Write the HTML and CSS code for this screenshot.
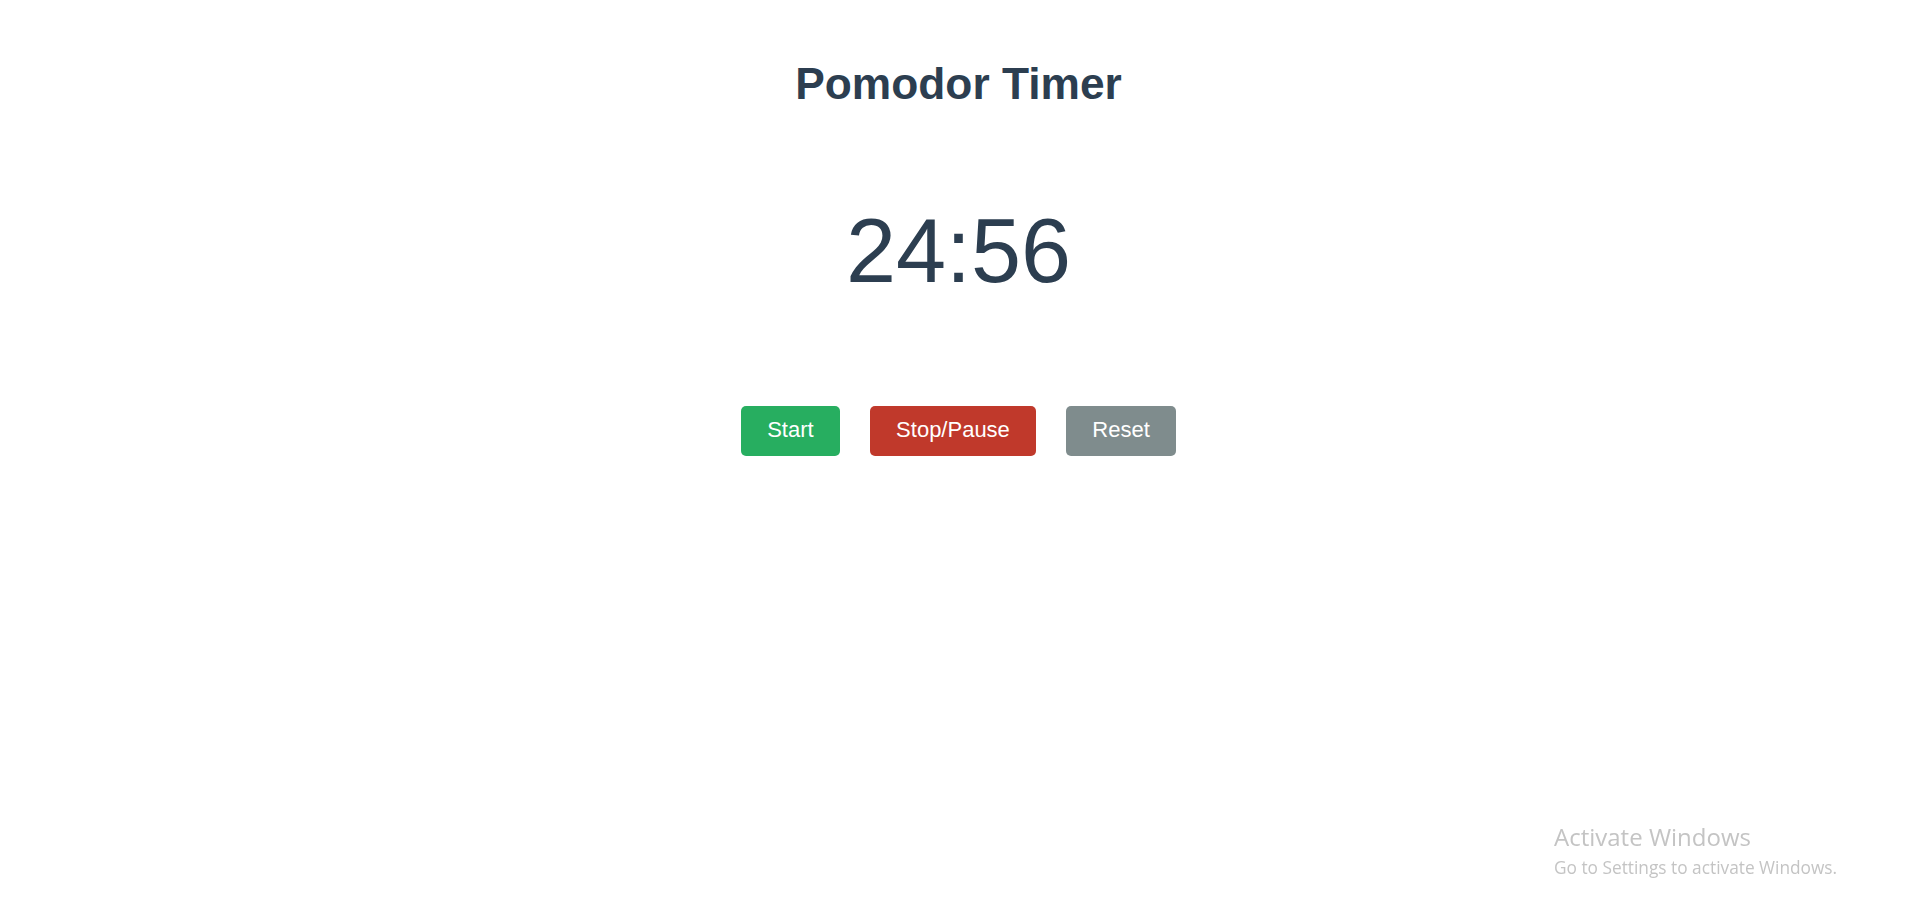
FILE: index.html
```html
<!DOCTYPE html>
<html lang="en">
<head>
<meta charset="utf-8">
<title>Pomodor Timer</title>
<link rel="stylesheet" href="styles.css">
</head>
<body>
<main class="app">
  <h1 class="title">Pomodor Timer</h1>
  <div class="timer">24:56</div>
  <div class="controls">
    <button class="btn btn-start">Start</button>
    <button class="btn btn-stop">Stop/Pause</button>
    <button class="btn btn-reset">Reset</button>
  </div>
</main>
<div class="watermark">
  <div class="wm-title">Activate Windows</div>
  <div class="wm-sub">Go to Settings to activate Windows.</div>
</div>
</body>
</html>
```
FILE: styles.css
```css
html, body {
  margin: 0;
  padding: 0;
  background: #ffffff;
}
body {
  font-family: "Liberation Sans", Arial, sans-serif;
  color: #2c3e50;
  height: 920px;
  overflow: hidden;
}
.app {
  display: flex;
  flex-direction: column;
  align-items: center;
}
.title {
  margin: 59px 0 0;
  font-size: 44.3px;
  font-weight: bold;
  line-height: 49px;
  color: #2c3e50;
}
.timer {
  margin-top: 93px;
  font-size: 90px;
  line-height: 100px;
  color: #2c3e50;
}
.controls {
  margin-top: 105px;
  display: flex;
  gap: 30.5px;
}
.btn {
  font-family: "Liberation Sans", Arial, sans-serif;
  font-size: 22px;
  line-height: 25px;
  padding: 11px 26px 14px;
  border: none;
  border-radius: 5px;
  color: #ffffff;
  cursor: pointer;
}
.btn-start { background: #27ae60; }
.btn-stop { background: #c0392b; }
.btn-reset { background: #7f8c8d; }
.watermark {
  position: fixed;
  left: 1554px;
  top: 823px;
  font-family: "Open Sans", "Noto Sans", sans-serif;
  color: #c4c4c4;
}
.wm-title {
  font-size: 24px;
  line-height: 28px;
}
.wm-sub {
  margin-top: 4px;
  font-size: 17.3px;
  line-height: 25px;
}
```
